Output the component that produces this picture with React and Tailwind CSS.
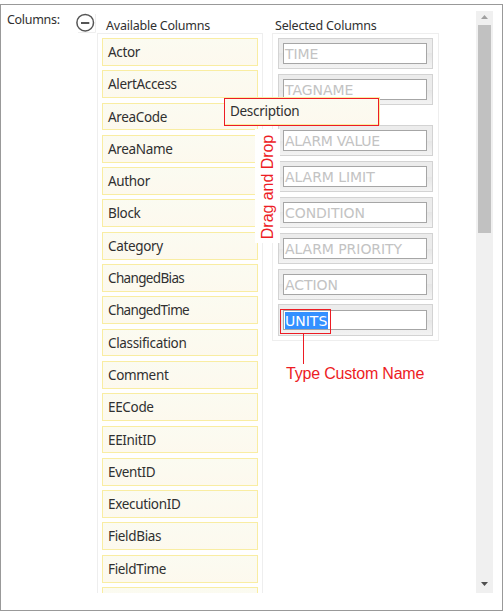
const available = [
  'Actor', 'AlertAccess', 'AreaCode', 'AreaName', 'Author', 'Block', 'Category', 'ChangedBias', 'ChangedTime',
  'Classification', 'Comment', 'EECode', 'EEInitID', 'EventID', 'ExecutionID', 'FieldBias', 'FieldTime', '',
];

const selected = ['TIME', 'TAGNAME', 'ALARM VALUE', 'ALARM LIMIT', 'CONDITION', 'ALARM PRIORITY', 'ACTION'];

const itemLook =
  'border border-[#f9eda2] bg-linear-to-b from-[#fbfbf1] to-[#fdf9ee] pl-[5px] text-[13.5px]';

function AvailableItem({ name }) {
  return (
    <div
      className={`mb-[4.5px] h-[27.8px] shrink-0 leading-[26px] ${itemLook} ${
        name.startsWith('Changed') ? 'tracking-[-0.65px]' : 'tracking-[-0.33px]'
      }`}
    >
      {name}
    </div>
  );
}

function SelectedItem({ name }) {
  return (
    <div
      className={`h-[31px] shrink-0 border border-[#d3d3d3] bg-linear-to-b from-[#ececec] from-50% via-[#e6e6e6] via-50% to-[#f3f3f3] py-1 pr-[5px] pl-1 ${
        name === 'TAGNAME' ? 'mb-5' : name === 'ACTION' ? 'mb-1' : 'mb-[5px]'
      }`}
    >
      <div
        className={`h-[21px] border border-[#a6a6a6] bg-white pl-px font-['DejaVu_Sans',sans-serif] text-[14px] leading-[20px] text-[#c3c3c3] ${
          name === 'ALARM VALUE' ? 'tracking-[-0.3px]' : 'tracking-[-0.05px]'
        }`}
      >
        {name}
      </div>
    </div>
  );
}

export default function App() {
  return (
    <div className="relative h-[611px] w-[503px] overflow-hidden bg-white pt-1 font-['Noto_Sans','Open_Sans',sans-serif] text-[#303030]">
      <div className="flex h-[607px] border border-[#999999] pt-[6px] pr-[9px]">
        <div className="w-[75px] pt-[1px] pl-[6px] text-[12.5px] leading-[16px] tracking-[-0.3px]">Columns:</div>
        <svg className="mt-[2px] h-5 w-5 shrink-0" viewBox="0 0 20 20" fill="none" stroke="#555">
          <path d="M19.5 1v18.5H2" stroke="#eeeeee" />
          <circle cx="9.2" cy="9.7" r="8.3" strokeWidth="1.5" />
          <path d="M5 10h8.3" strokeWidth="2" />
        </svg>

        <div className="flex h-[582px] w-[167px] shrink-0 flex-col overflow-hidden pl-px">
          <h2 className="h-[22px] shrink-0 pt-[7px] pl-[9px] text-[12.5px] leading-[15px] tracking-[-0.22px]">Available Columns</h2>
          <div className="flex h-[600px] w-[166px] shrink-0 flex-col border border-[#eeeeee] px-1 pt-1">
            {available.map((name, i) => (
              <AvailableItem key={i} name={name} />
            ))}
          </div>
        </div>

        <div className="ml-[9px] w-[167px] shrink-0">
          <h2 className="h-[22px] pt-[7px] pl-[3px] text-[12.5px] leading-[15px] tracking-[-0.18px]">Selected Columns</h2>
          <div className="flex h-[308px] flex-col border border-[#eeeeee] pt-1 pr-[5px] pl-[5px]">
            {selected.map((name) => (
              <SelectedItem key={name} name={name} />
            ))}
            <div className="h-8 shrink-0 border border-[#d3d3d3] bg-linear-to-b from-[#ececec] from-50% via-[#e6e6e6] via-50% to-[#f3f3f3] pt-[5px] pr-[5px] pl-1">
              <div className="flex h-5 border border-[#a6a6a6] bg-white pt-px pl-px font-['DejaVu_Sans',sans-serif] text-[14px] leading-[18px]">
                <span className="h-[17px] w-[43px] bg-[#3390ff] text-white">UNITS</span>
              </div>
            </div>
          </div>
        </div>

        <div className="ml-auto flex h-[582px] w-[17px] shrink-0 flex-col items-center bg-[#f0f0f0]">
          <svg className="h-[14px] w-[17px] shrink-0" viewBox="0 0 17 14">
            <path d="M5 8h7L8.5 4z" fill="#a0a0a0" />
          </svg>
          <div className="h-[208px] w-[13px] bg-[#c1c1c1]" />
          <svg className="mt-auto h-[17px] w-[17px] shrink-0" viewBox="0 0 17 17">
            <path d="M5 6h7L8.5 10z" fill="#505050" />
          </svg>
        </div>
      </div>

      <div className="absolute top-[129px] left-[255px] flex h-[114px] w-[25px] items-center justify-center bg-white pt-px pl-px">
        <span className="-rotate-90 font-['Liberation_Sans',sans-serif] text-[16px] leading-[20px] tracking-[-0.05px] whitespace-nowrap text-[#ed1c24]">
          Drag and Drop
        </span>
      </div>
      <div className={`absolute top-[98px] left-[224px] h-[28px] w-[155px] leading-[25px] tracking-[-0.3px] shadow-[inset_0_-1px_0_#f9eda2,1px_-1px_0_#f9eda2] ${itemLook} border-[#ed1c24]!`}>
        Description
      </div>

      <div className="absolute top-[309px] left-[280px] h-[25px] w-[51px] border border-[#ed1c24]" />
      <div className="absolute top-[334px] left-[303px] h-[30px] w-px bg-[#ed1c24]" />
      <div className="absolute top-[364px] left-[286px] font-['Liberation_Sans',sans-serif] text-[16px] leading-[20px] tracking-[-0.2px] whitespace-nowrap text-[#ed1c24]">
        Type Custom Name
      </div>
    </div>
  );
}
